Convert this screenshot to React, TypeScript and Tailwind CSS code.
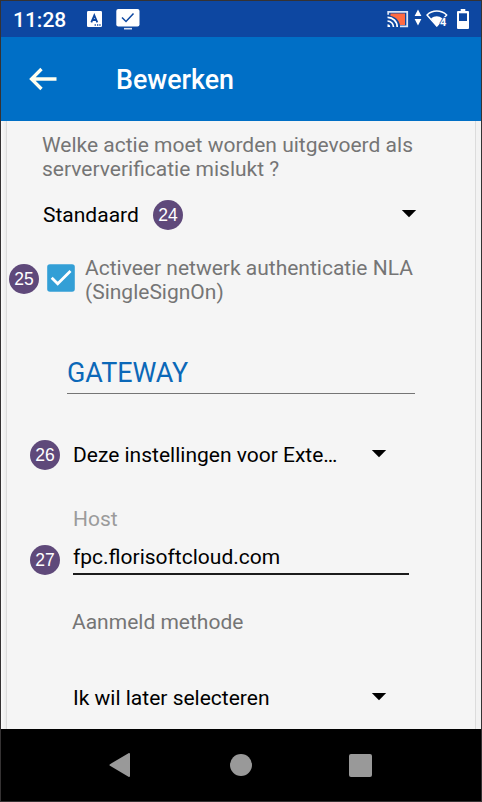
import React from "react";

function Badge({ n, className = "" }: { n: number; className?: string }) {
  return (
    <span
      className={`flex h-[30px] w-[30px] shrink-0 items-center justify-center rounded-full bg-[#5f497a] pt-[2px] font-['Liberation_Sans',sans-serif] text-[17.5px] leading-none text-white ${className}`}
    >
      {n}
    </span>
  );
}

function Caret({ className = "" }: { className?: string }) {
  return (
    <svg className={`h-[8px] w-[16px] shrink-0 ${className}`} viewBox="0 0 16 8">
      <path d="M0.8 0h14.4L8 7.2z" fill="#000" />
    </svg>
  );
}

function StatusBar() {
  return (
    <div className="flex h-[36px] items-center bg-[#0d47a1] pl-[12px] text-white">
      <span className="w-[74px] pt-[1px] text-[21px] leading-[24px] font-medium">11:28</span>
      <svg className="h-[16px] w-[15px]" viewBox="0 0 15 16">
        <rect width="15" height="16" rx="1.2" fill="#fff" />
        <path d="M4.3 11.300L7.300 4.300l3 7M5.300 9h4" fill="none" stroke="#0d47a1" strokeWidth="1.8" />
        <path d="M7.600 14h1.300M10 14h1.300M12.300 14h1.300" stroke="#0d47a1" strokeWidth="1.3" />
      </svg>
      <svg className="ml-[14px] h-[22px] w-[24px]" viewBox="0 0 24 22">
        <rect x="0.3" y="1" width="23.2" height="17.5" rx="2" fill="#fff" />
        <path d="M6 9.500l4 4 7.500-8" fill="none" stroke="#0d47a1" strokeWidth="1.5" />
        <path d="M8 20.7h8" stroke="#d9e2f2" strokeWidth="1.6" />
      </svg>
      <svg className="ml-[247px] h-[18px] w-[22px]" viewBox="0 0 22 18">
        <path d="M3.500 3.500h14.500v11.500H13C12 10 8 6.500 3.500 6z" fill="#ff6b42" />
        <path d="M1.200 4.800V1.800h19v14.500H13" fill="none" stroke="#dce5f5" strokeWidth="1.800" />
        <path d="M.5 7.300a9.500 9.500 0 0 1 9.700 9.700M.5 11a6 6 0 0 1 6 6" fill="none" stroke="#fff" strokeWidth="1.700" />
        <path d="M.5 14.300a2.700 2.700 0 0 1 2.700 2.700H.5z" fill="#fff" />
      </svg>
      <svg className="mb-[4px] ml-[5px] h-[17px] w-[8px]" viewBox="0 0 8 17">
        <path d="M4 .5l3.400 6.500H.6zM4 16.500l3.400-6.500H.6z" fill="#fff" />
      </svg>
      <svg className="mb-[1px] ml-[4px] h-[20px] w-[24px]" viewBox="0 0 24 20">
        <path d="M1 6C6.500 .8 15 .8 20.700 6L10.800 17z" fill="none" stroke="#fff" strokeWidth="1.500" strokeLinejoin="round" />
        <path d="M5 9.500c3.700-3 7.800-3 11.400 0l-5.700 8.200z" fill="#fff" />
        <text x="14" y="17" fontSize="11" fontWeight="700" fill="#fff" stroke="#0d47a1" strokeWidth="1.500" paintOrder="stroke">4</text>
      </svg>
      <svg className="ml-[7px] h-[20px] w-[12px]" viewBox="0 0 12 20">
        <path d="M1 2h2.700V0h4.600V2H11a1 1 0 0 1 1 1v16a1 1 0 0 1-1 1H1a1 1 0 0 1-1-1V3a1 1 0 0 1 1-1z" fill="#fff" />
        <path d="M2 4.300h8v7.700H2z" fill="#0d47a1" />
      </svg>
    </div>
  );
}

export default function App() {
  return (
    <div className="flex h-[802px] w-[482px] flex-col overflow-hidden border border-[#353233] bg-[#f5f5f5] font-[Roboto,sans-serif] text-[21px] leading-[24px] whitespace-nowrap text-black">
      <StatusBar />
      <header className="flex h-[84px] items-center bg-[#006fc6] text-white">
        <svg className="ml-[28px] h-[24px] w-[28px]" viewBox="0 0 28 24">
          <path d="M27.500 12H3M12.500 2L2.500 12l10 10" fill="none" stroke="#fffff0" strokeWidth="3.300" />
        </svg>
        <h1 className="ml-[59px] pt-[2px] text-[26.8px] leading-[30px] font-medium">Bewerken</h1>
      </header>
      <main className="flex h-[608px]">
        <div className="w-[6px] border-r border-[#dcdcdc] bg-gradient-to-r from-[#fafafa] to-[#ececec]" />
        <div className="h-full w-[468px] pt-[12px]">
          <p className="pl-[35px] text-[#757575]">
            Welke actie moet worden uitgevoerd als
            <br />
            serververificatie mislukt ?
          </p>
          <div className="mt-[18px] flex h-[31px] items-center pl-[36px]">
            <span className="w-[110px]">Standaard</span>
            <Badge n={24} />
            <Caret className="mb-[2px] ml-[218px]" />
          </div>
          <div className="mt-[26px] flex pl-[2px]">
            <Badge n={25} className="mt-[8px]" />
            <svg className="mt-[8px] ml-[8px] h-[28px] w-[28px]" viewBox="0 0 28 28">
              <rect x=".2" y=".2" width="27.600" height="27.600" rx="2.800" fill="#339fd6" />
              <path d="M4.700 13.700l6 6L23.500 7" fill="none" stroke="#fff" strokeWidth="2.800" />
            </svg>
            <p className="ml-[10px] text-[#757575]">
              Activeer netwerk authenticatie NLA
              <br />
              (SingleSignOn)
            </p>
          </div>
          <h2 className="mt-[53px] ml-[60px] h-[37px] w-[348px] border-b border-[#757575] text-[26.9px] leading-[33px] text-[#0b68b8]">
            GATEWAY
          </h2>
          <div className="mt-[46px] flex h-[30px] items-center pl-[23px]">
            <Badge n={26} />
            <span className="ml-[13px] w-[298px]">Deze instellingen voor Exte…</span>
            <Caret className="mb-[2px]" />
          </div>
          <div className="mt-[37px] pl-[66px] text-[#9b9b9b]">Host</div>
          <div className="mt-[13px] flex h-[31px] pl-[23px]">
            <Badge n={27} className="mt-[1px]" />
            <div className="ml-[13px] h-[31px] w-[336px] border-b-2 border-[#1c1c1c] pt-[1px]">fpc.florisoftcloud.com</div>
          </div>
          <div className="mt-[35px] pl-[65px] text-[#757575]">Aanmeld methode</div>
          <div className="mt-[52px] flex h-[24px] items-center pl-[66px]">
            <span className="w-[298px]">Ik wil later selecteren</span>
            <Caret className="mb-[2px]" />
          </div>
        </div>
        <div className="flex-1 border-l border-[#dcdcdc] bg-[#f2f2f2]" />
      </main>
      <nav className="flex h-[72px] items-center bg-black">
        <svg className="ml-[108px] h-[24px] w-[21px]" viewBox="0 0 21 24">
          <path d="M20 1v22L1.500 12z" fill="#999" stroke="#999" strokeWidth="2" strokeLinejoin="round" />
        </svg>
        <span className="ml-[100px] h-[22px] w-[22px] rounded-full bg-[#999]" />
        <span className="ml-[97px] h-[23px] w-[23px] rounded-[2px] bg-[#999]" />
      </nav>
    </div>
  );
}
